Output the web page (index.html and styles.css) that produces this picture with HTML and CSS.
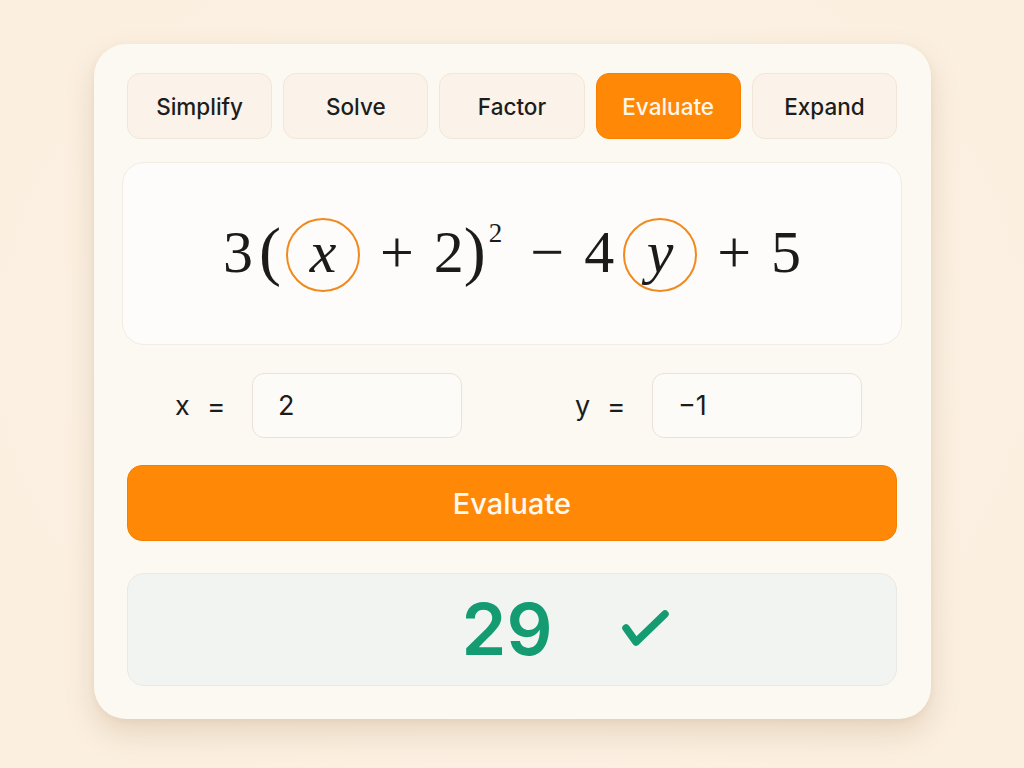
FILE: index.html
```html
<!DOCTYPE html>
<html>
<head>
<meta charset="utf-8">
<link rel="stylesheet" href="styles.css">
</head>
<body>
<div class="card">
  <div class="tabs">
    <div class="tab">Simplify</div>
    <div class="tab">Solve</div>
    <div class="tab">Factor</div>
    <div class="tab active">Evaluate</div>
    <div class="tab">Expand</div>
  </div>
  <div class="expr-box">
    <div class="expr">
      <span class="tok">3</span>
      <span class="tok paren open">(</span>
      <span class="var var-x">x</span>
      <span class="tok op">+</span>
      <span class="tok">2</span>
      <span class="tok paren">)</span>
      <span class="sup">2</span>
      <span class="tok op">−</span>
      <span class="tok">4</span>
      <span class="var var-y">y</span>
      <span class="tok op">+</span>
      <span class="tok">5</span>
    </div>
  </div>
  <div class="inputs">
    <div class="field">
      <span class="label">x</span>
      <span class="eq">=</span>
      <div class="input">2</div>
    </div>
    <div class="field">
      <span class="label">y</span>
      <span class="eq">=</span>
      <div class="input">−1</div>
    </div>
  </div>
  <div class="evaluate">Evaluate</div>
  <div class="result">
    <span></span>
    <span class="value">29</span>
    <svg class="check" width="52" height="42" viewBox="0 0 52 42">
      <path d="M6 19 L16 33 L45 5" fill="none" stroke="#149b72" stroke-width="7.5" stroke-linecap="round" stroke-linejoin="round"/>
    </svg>
  </div>
</div>
</body>
</html>
```

FILE: styles.css
```css
html, body {
  margin: 0;
  padding: 0;
}
body {
  background: radial-gradient(ellipse at 50% 45%, #fcf3e8 0%, #fbefe0 80%);
  width: 1024px;
  height: 768px;
  overflow: hidden;
  font-family: Inter, "Liberation Sans", sans-serif;
  color: #1c1c1c;
}
.card {
  box-sizing: border-box;
  width: 837px;
  height: 675px;
  margin: 44px 0 0 94px;
  background: #fcf8f2;
  border-radius: 32px;
  padding: 29px 34px 0 33px;
  box-shadow: 0 14px 30px rgba(150, 110, 60, 0.20), 0 2px 6px rgba(150, 110, 60, 0.08);
}
.tabs {
  display: grid;
  grid-template-columns: repeat(5, 1fr);
  gap: 11px;
  height: 66px;
}
.tab {
  box-sizing: border-box;
  display: flex;
  align-items: center;
  justify-content: center;
  background: #fbf3e9;
  border: 1.5px solid #f1e6d8;
  border-radius: 13px;
  font-size: 22.5px;
  font-weight: 500;
  color: #1d1d1d;
  padding-top: 1px;
}
.tab.active {
  background: #ff8806;
  border-color: #f58000;
  color: #fff7ec;
}
.expr-box {
  box-sizing: border-box;
  margin: 23px -5px 0 -5px;
  height: 183px;
  background: #fdfcfa;
  border: 1.5px solid #f1ece4;
  border-radius: 22px;
  display: flex;
  align-items: center;
  justify-content: center;
}
.expr {
  display: flex;
  align-items: center;
  font-family: "Liberation Serif", "DejaVu Serif", serif;
  font-size: 60px;
  color: #1b1b1b;
  height: 74px;
  margin-top: 3px;
}
.tok {
  line-height: 1;
  margin-bottom: 7px;
}
.op {
  margin: 0 20px 7px;
}
.paren {
  font-size: 66px;
  font-weight: 300;
  margin-bottom: 9px;
}
.paren.open {
  margin-left: 6px;
}
.var {
  box-sizing: border-box;
  width: 74px;
  height: 74px;
  border: 2px solid #f08a1e;
  border-radius: 50%;
  display: flex;
  align-items: center;
  justify-content: center;
  font-style: italic;
  line-height: 1;
  padding-bottom: 6px;
}
.var-x {
  margin-left: 5px;
}
.var-y {
  margin-left: 9px;
}
.sup {
  align-self: flex-start;
  font-size: 27px;
  line-height: 1;
  margin-top: 2px;
  margin-left: 3px;
  margin-right: 8px;
}
.inputs {
  display: flex;
  margin-top: 28px;
  padding-left: 48px;
  gap: 113px;
  height: 65px;
}
.field {
  display: flex;
  align-items: center;
}
.label {
  font-size: 27px;
  width: 32px;
}
.eq {
  font-size: 28px;
  width: 45px;
}
.input {
  box-sizing: border-box;
  width: 210px;
  height: 65px;
  background: #fdfbf8;
  border: 1.5px solid #ebe1d4;
  border-radius: 12px;
  display: flex;
  align-items: center;
  padding-left: 25px;
  font-size: 27px;
  color: #1c1c1c;
}
.evaluate {
  box-sizing: border-box;
  margin-top: 27px;
  height: 76px;
  background: #ff8806;
  border: 1px solid #f27f00;
  border-radius: 15px;
  display: flex;
  align-items: center;
  justify-content: center;
  color: #fff8ee;
  font-size: 29px;
  font-weight: 500;
}
.result {
  box-sizing: border-box;
  margin-top: 32px;
  height: 113px;
  background: #f2f4f1;
  border: 1.5px solid #e9eae5;
  border-radius: 17px;
  display: grid;
  grid-template-columns: 1fr auto 1fr;
  align-items: center;
}
.value {
  font-size: 72px;
  font-weight: 600;
  color: #149b72;
  line-height: 1;
  margin-top: -2px;
  margin-right: 10px;
}
.check {
  margin-left: 58px;
  margin-top: 0;
}
```
